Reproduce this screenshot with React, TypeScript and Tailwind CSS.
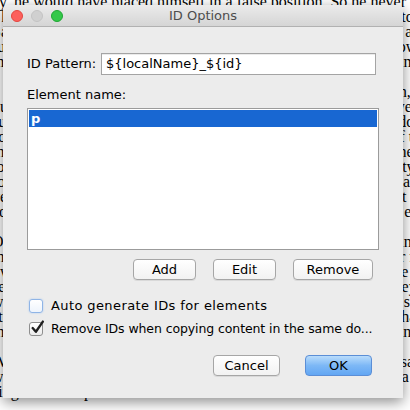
import React from "react";

const ui = { fontFamily: '"DejaVu Sans", "Liberation Sans", sans-serif' };

const bgLines = [
  "ey, he would have placed himself in a false position. So he never op",
  "r his manners and his speech were courteous, and he knew how to make S",
  "Saint-Simon and all the others who surrounded him feel at ease, as a",
  "rule; he was always civil, always polite, and he never showed how",
  "much he disliked certain things, and yet people were afraid of him in",
  "",
  "a certain way. He would look into their faces with a kind of calm, le",
  "dull, even gaze, and it seemed to them that he knew what they were m",
  "suffering, or what they had done, and what they had in mind to do, ur",
  "so that none of them could be at ease with him. It was as if all of th",
  "them felt that he was a judge who would give his verdict upon their cu",
  "to their faces, without any hesitation, and without any kind of pity le",
  "for their weakness. Nobody was ever heard to complain of him, and er",
  "yet, without being told, all of them knew that he had a very strict )",
  "code, and that he would not pardon any breach of it by anybody else ea",
  "",
  "On the contrary, he was very gentle with those who served him in o",
  "the house, and often talked to them about their families and their n",
  "own affairs; he would listen to them for an hour together, and the [c",
  "servants liked him better than anybody else in the family, and they av",
  "were ready to do anything for him at any time. It seemed a little st",
  "strange that a man so severe should be so kind, but he was like that ai",
  "in everything; he lived very simply, and he did not care for a grand ta",
  "",
  "When he was alone, he would think over his own actions in the same W",
  "way he judged the actions of others, and in the same strict and ga",
  "singular introspective fashion.",
];

function Button({ label, w, primary }: { label: string; w: string; primary?: boolean }) {
  return (
    <div
      className={`${w} flex h-[21px] items-center justify-center rounded-[4px] border text-[13px] text-black ${
        primary
          ? "border-[#5b8ed6] bg-gradient-to-b from-[#b9dcfb] via-[#7db8f6] to-[#62a6f3]"
          : "border-[#a6a6a6] bg-gradient-to-b from-white to-[#f2f2f2] shadow-[0_1px_0_rgba(0,0,0,0.08)]"
      }`}
    >
      {label}
    </div>
  );
}

export default function App() {
  return (
    <div className="relative h-[410px] w-[410px] overflow-hidden bg-white">
      {/* document behind the dialog */}
      <div
        className="-mt-[6px] ml-[-8px] flex flex-col text-[16px] leading-[15px] text-black"
        style={{ fontFamily: '"Liberation Serif", serif' }}
      >
        {bgLines.map((l, i) => (
          <div key={i} className="h-[15px] whitespace-nowrap">
            {l}
          </div>
        ))}
      </div>

      {/* dialog */}
      <div
        className="absolute left-[3px] top-[5px] flex h-[393px] w-[400px] flex-col overflow-hidden rounded-t-[5px] bg-[#ececec] shadow-[0_4px_14px_rgba(0,0,0,0.45)]"
        style={ui}
      >
        <div className="relative flex h-[22px] items-center justify-center border-b border-[#b1b1b1] bg-gradient-to-b from-[#ebebeb] to-[#d5d5d5]">
          <div className="absolute left-[8px] top-[5px] flex gap-[8px]">
            <div className="h-[12px] w-[12px] rounded-full border border-[#e2463f] bg-[#fc605c]" />
            <div className="h-[12px] w-[12px] rounded-full border border-[#c3c3c3] bg-[#d0d0d0]" />
            <div className="h-[12px] w-[12px] rounded-full border border-[#1fa633] bg-[#34c84a]" />
          </div>
          <span className="text-[13px] text-[#4d4d4d]">ID Options</span>
        </div>

        <div className="flex flex-col pl-[24px] pr-[22px] pt-[26px] text-[13px] leading-[16px] text-black">
          <div className="flex items-center">
            <span className="w-[74px]">ID Pattern:</span>
            <div className="flex h-[22px] w-[275px] items-center border border-[#a4a4a4] bg-white pl-[4px] shadow-[inset_0_1px_0_rgba(0,0,0,0.08)]">
              {"${localName}_${id}"}
            </div>
          </div>

          <div className="mt-[12px]">Element name:</div>

          <div className="mt-[5px] flex h-[142px] w-[352px] flex-col border border-[#9b9b9b] bg-white p-[1px]">
            <div className="flex h-[17px] items-center bg-[#1867d2] pl-[2px] font-bold text-white">p</div>
          </div>

          <div className="mt-[9px] flex w-[346px] justify-end gap-[17px]">
            <Button label="Add" w="w-[63px]" />
            <Button label="Edit" w="w-[63px]" />
            <Button label="Remove" w="w-[80px]" />
          </div>

          <div className="mt-[18px] flex items-center gap-[8px] pl-[2px]">
            <div className="h-[14px] w-[14px] shrink-0 rounded-[3px] border border-[#8fb4e6] bg-gradient-to-b from-white to-[#eef4fc] shadow-[0_0_2px_#a9c8f0]" />
            <span className="tracking-[0.4px]">Auto generate IDs for elements</span>
          </div>
          <div className="mt-[7px] flex items-center gap-[8px] pl-[2px]">
            <div className="relative h-[14px] w-[14px] shrink-0 rounded-[3px] border border-[#8e8e8e] bg-gradient-to-b from-white to-[#ececec]">
              <svg viewBox="0 0 14 14" className="absolute -top-[3px] left-[0px] h-[15px] w-[15px]">
                <path d="M2.5 7.5 L5.5 11 L12 1.5" fill="none" stroke="#1f1f1f" strokeWidth="2.2" strokeLinecap="round" strokeLinejoin="round" />
              </svg>
            </div>
            <span className="whitespace-nowrap text-[12.5px] tracking-[-0.1px]">Remove IDs when copying content in the same do...</span>
          </div>

          <div className="mt-[18px] flex w-[345px] justify-end gap-[25px]">
            <Button label="Cancel" w="w-[67px]" />
            <Button label="OK" w="w-[67px]" primary />
          </div>
        </div>
      </div>
    </div>
  );
}
